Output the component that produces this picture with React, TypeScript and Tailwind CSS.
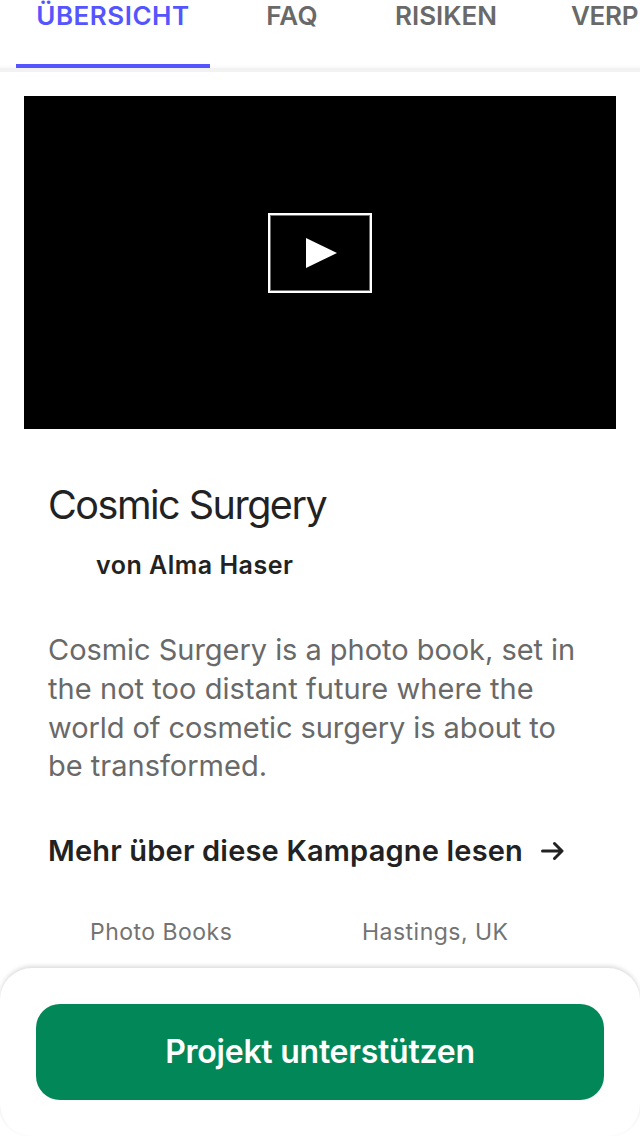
export default function App() {
  return (
    <main className="flex h-[1136px] w-[640px] flex-col overflow-hidden bg-white font-[Inter,sans-serif] text-[#222222]">
      <nav className="h-[72px] shrink-0 overflow-hidden border-b-4 border-[#f2f2f2] bg-linear-to-b from-white from-95% to-[#f8f8f8] text-[26px] leading-8 font-semibold text-[#696969]">
        <div className="flex h-[68px] pl-4 whitespace-nowrap">
          <div className="w-[194px] shrink-0 border-b-4 border-[#5555ff] text-center tracking-[0.5px] text-[#5555ff]">ÜBERSICHT</div>
          <div className="w-[164px] shrink-0 text-center tracking-[0.2px]">FAQ</div>
          <div className="w-[144px] shrink-0 text-center">RISIKEN</div>
          <div className="pl-[53px] tracking-[-0.3px]">VERP</div>
        </div>
      </nav>
      <div className="mx-6 mt-6 flex h-[333px] shrink-0 items-center justify-center bg-black">
        <div className="mt-[-20px] flex h-20 w-[104px] items-center justify-center border-2 border-white pl-0.5 shadow-[inset_0_0_0_1px_#707070]">
          <svg width="32" height="32" viewBox="0 0 32 32" fill="white"><path d="M1 1L32 16L1 31Z" /></svg>
        </div>
      </div>
      <section className="h-[539px] shrink-0 px-12 pt-[50px]">
        <h1 className="text-[39.5px] leading-[52px] tracking-[-1.5px]">Cosmic Surgery</h1>
        <p className="mt-[18px] pl-12 text-[25px] leading-8 font-semibold tracking-[0.5px]">von Alma Haser</p>
        <div className="mt-[49px] text-[29px] whitespace-nowrap text-[#696969]">
          <p className="leading-[39px] tracking-[-0.04px]">Cosmic Surgery is a photo book, set in</p>
          <p className="leading-[39px] tracking-[0.06px]">the not too distant future where the</p>
          <p className="leading-[39px] tracking-[-0.08px]">world of cosmetic surgery is about to</p>
          <p className="leading-[37px]">be transformed.</p>
        </div>
        <div className="mt-[47px] flex items-center text-[29px] leading-10 font-semibold whitespace-nowrap">
          <span className="w-[493px] tracking-[0.18px]">Mehr über diese Kampagne lesen</span>
          <svg width="23" height="20" viewBox="0 0 23 20" fill="none" stroke="currentColor" strokeWidth="3" strokeLinecap="round" strokeLinejoin="round"><path d="M1.5 10H20.5M13.5 2.5L21 10L13.5 17.5" /></svg>
        </div>
        <div className="mt-[45px] flex pl-[42px] text-[23px] leading-8 tracking-[0.48px] text-[#737373]">
          <span className="w-[272px]">Photo Books</span>
          <span>Hastings, UK</span>
        </div>
      </section>
      <footer className="h-[168px] shrink-0 rounded-[32px] bg-white px-9 pt-9 shadow-[0_-2px_4px_rgba(0,0,0,0.14)]">
        <button className="h-24 w-full rounded-3xl bg-[#028858] text-[32px] font-semibold tracking-[-0.25px] text-white">Projekt unterstützen</button>
      </footer>
    </main>
  );
}
